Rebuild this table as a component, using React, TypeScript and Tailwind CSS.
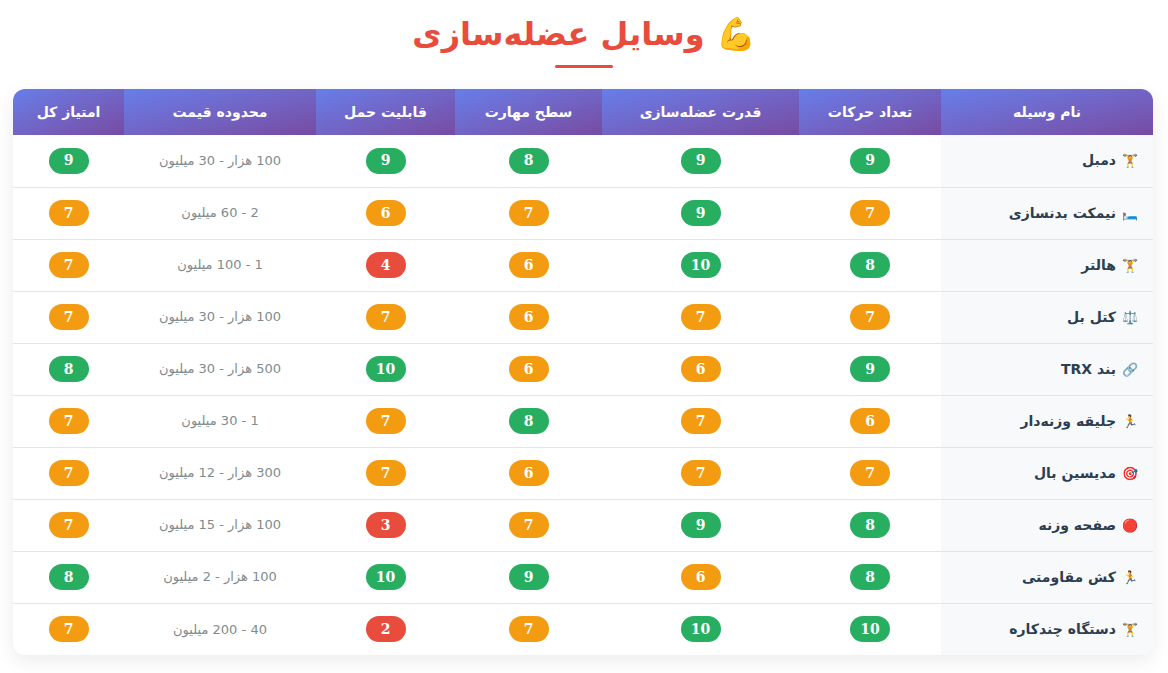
import React from 'react'

type Row = {
  icon: string
  name: string
  moves: number
  power: number
  skill: number
  portable: number
  price: string
  total: number
}

const rows: Row[] = [
  { icon: '🏋️', name: 'دمبل', moves: 9, power: 9, skill: 8, portable: 9, price: '100 هزار - 30 میلیون', total: 9 },
  { icon: '🛏️', name: 'نیمکت بدنسازی', moves: 7, power: 9, skill: 7, portable: 6, price: '2 - 60 میلیون', total: 7 },
  { icon: '🏋️', name: 'هالتر', moves: 8, power: 10, skill: 6, portable: 4, price: '1 - 100 میلیون', total: 7 },
  { icon: '⚖️', name: 'کتل بل', moves: 7, power: 7, skill: 6, portable: 7, price: '100 هزار - 30 میلیون', total: 7 },
  { icon: '🔗', name: 'بند TRX', moves: 9, power: 6, skill: 6, portable: 10, price: '500 هزار - 30 میلیون', total: 8 },
  { icon: '🏃', name: 'جلیقه وزنه‌دار', moves: 6, power: 7, skill: 8, portable: 7, price: '1 - 30 میلیون', total: 7 },
  { icon: '🎯', name: 'مدیسین بال', moves: 7, power: 7, skill: 6, portable: 7, price: '300 هزار - 12 میلیون', total: 7 },
  { icon: '🔴', name: 'صفحه وزنه', moves: 8, power: 9, skill: 7, portable: 3, price: '100 هزار - 15 میلیون', total: 7 },
  { icon: '🏃', name: 'کش مقاومتی', moves: 8, power: 6, skill: 9, portable: 10, price: '100 هزار - 2 میلیون', total: 8 },
  { icon: '🏋️', name: 'دستگاه چندکاره', moves: 10, power: 10, skill: 7, portable: 2, price: '40 - 200 میلیون', total: 7 },
]

function Badge({ value }: { value: number }) {
  const color = value >= 8 ? 'bg-[#27ae60]' : value >= 5 ? 'bg-[#f39c12]' : 'bg-[#e74c3c]'
  return (
    <span
      className={`${color} inline-flex h-[26px] w-[40px] items-center justify-center rounded-full text-[14px] font-bold text-white font-['DejaVu_Serif',serif]`}
    >
      {value}
    </span>
  )
}

const headers = [
  { label: 'نام وسیله', w: 'w-[212px]' },
  { label: 'تعداد حرکات', w: 'w-[142px]' },
  { label: 'قدرت عضله‌سازی', w: 'w-[197px]' },
  { label: 'سطح مهارت', w: 'w-[147px]' },
  { label: 'قابلیت حمل', w: 'w-[139px]' },
  { label: 'محدوده قیمت', w: 'w-[192px]' },
  { label: 'امتیاز کل', w: 'w-[111px]' },
]

export default function App() {
  return (
    <div dir="rtl" className="min-h-screen bg-white font-['DejaVu_Sans',sans-serif] pt-[11px]">
      <div className="flex flex-col items-center">
        <h1 className="text-[32px] font-bold leading-[46px] text-[#e74c3c]">💪 وسایل عضله‌سازی</h1>
        <div className="mt-[8px] h-[3px] w-[58px] rounded-full bg-[#e74c3c]" />
      </div>

      <div className="mr-[15px] mt-[21px] w-[1140px] overflow-hidden rounded-[12px] bg-white shadow-[0_6px_20px_rgba(0,0,0,0.08)]">
        <table className="w-full table-fixed border-collapse">
          <thead>
            <tr>
              {headers.map((h) => (
                <th
                  key={h.label}
                  className={`${h.w} h-[46px] bg-gradient-to-br from-[#667eea] to-[#764ba2] text-center text-[14px] font-bold text-white`}
                >
                  {h.label}
                </th>
              ))}
            </tr>
          </thead>
          <tbody>
            {rows.map((r, i) => (
              <tr key={i} className={i < rows.length - 1 ? 'border-b border-[#e3e6e8]' : ''}>
                <td className="h-[52px] bg-[#f8f9fa] pr-[15px] text-right text-[14px] font-semibold text-[#2c3e50]">
                  <span className="ml-[6px] text-[13px]">{r.icon}</span>
                  {r.name}
                </td>
                <td className="text-center"><Badge value={r.moves} /></td>
                <td className="text-center"><Badge value={r.power} /></td>
                <td className="text-center"><Badge value={r.skill} /></td>
                <td className="text-center"><Badge value={r.portable} /></td>
                <td className="text-center text-[13px] text-[#7f8c8d]">{r.price}</td>
                <td className="text-center"><Badge value={r.total} /></td>
              </tr>
            ))}
          </tbody>
        </table>
      </div>
    </div>
  )
}
